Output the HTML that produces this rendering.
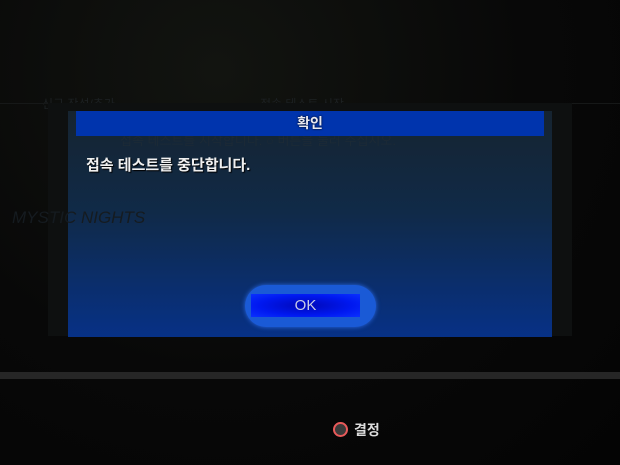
<!DOCTYPE html>
<html><head><meta charset="utf-8"><style>
*{margin:0;padding:0;box-sizing:border-box}
body{width:620px;height:465px;overflow:hidden;background:#070707;font-family:"Liberation Sans","Noto Sans CJK KR",sans-serif;position:relative}
.abs{position:absolute}
.bg{left:0;top:0;width:620px;height:465px;background:radial-gradient(ellipse at 35% 15%,#121410 0%,#080808 55%,#040404 100%)}
.back{left:48px;top:103px;width:524px;height:233px;background:#0e1010}
.topline{left:0;top:103px;width:620px;height:1px;background:#161818}
.dlg{left:68px;top:111px;width:484px;height:226px;background:linear-gradient(#162430 0%,#102a48 45%,#073186 100%)}
.title{left:76px;top:111px;width:468px;height:25px;background:#0034ad;color:#e8e8f0;font-size:14px;text-align:center;line-height:25px;font-weight:bold;text-shadow:0 0 2px #000}
.msg{left:86px;top:154px;color:#f0f0f0;font-size:15px;font-weight:bold;text-shadow:1px 1px 1px #000}
.ghost{color:#1c2022;font-size:12px}
.btnglow{left:245px;top:285px;width:131px;height:42px;border-radius:21px;background:#1a5ad6;box-shadow:0 0 5px #2a6ae8}
.btn{left:251px;top:294px;width:109px;height:23px;background:radial-gradient(ellipse at center,#0008b8 0%,#0018f0 60%,#0a30ff 100%);color:#c8cce8;font-size:15px;text-align:center;line-height:24px}
.bar{left:0;top:372px;width:620px;height:7px;background:#262626}
.circ{left:333px;top:422px;width:15px;height:15px;border-radius:50%;border:2px solid #e85a5a;background:#3a3a3a}
.ok2{left:354px;top:420px;color:#ddd;font-size:14px;font-weight:bold}
</style></head><body>
<div class="abs bg"></div>
<div class="abs ghost" style="left:42px;top:95px">신규 작성/추가</div>
<div class="abs ghost" style="left:260px;top:95px">접속 테스트 시작</div>
<div class="abs topline"></div>
<div class="abs back"></div>
<div class="abs dlg"></div>
<div class="abs ghost" style="left:120px;top:130px;color:#1c2a36;font-size:13px">접속 테스트를 시작합니다. ○ 버튼을 눌러 주십시오.</div>
<div class="abs ghost" style="left:12px;top:208px;color:#151b20;font-size:17px;font-style:italic">MYSTIC NIGHTS</div>
<div class="abs title">확인</div>
<div class="abs msg">접속 테스트를 중단합니다.</div>
<div class="abs btnglow"></div>
<div class="abs btn">OK</div>
<div class="abs bar"></div>
<div class="abs circ"></div>
<div class="abs ok2">결정</div>
</body></html>
